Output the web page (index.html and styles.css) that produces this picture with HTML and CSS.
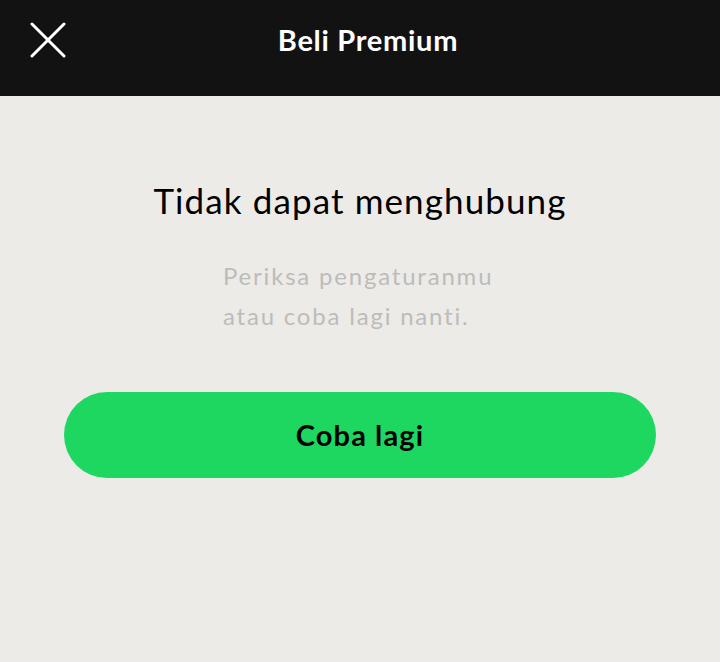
FILE: index.html
```html
<!DOCTYPE html>
<html>
<head>
<meta charset="utf-8">
<link rel="stylesheet" href="styles.css">
</head>
<body>
<div class="app">
  <header class="topbar">
    <button class="close" aria-label="Tutup">
      <svg width="36" height="36" viewBox="0 0 36 36"><path d="M2 2 L34 34 M34 2 L2 34" stroke="#fff" stroke-width="3" stroke-linecap="round" fill="none"/></svg>
    </button>
    <h1 class="title">Beli Premium</h1>
  </header>
  <main class="content">
    <h2 class="heading">Tidak dapat menghubung</h2>
    <p class="message">Periksa pengaturanmu<br>atau coba lagi nanti.</p>
    <button class="retry">Coba lagi</button>
  </main>
</div>
</body>
</html>
```
FILE: styles.css
```css
html, body {
  margin: 0;
  padding: 0;
}
body {
  width: 720px;
  height: 662px;
  background: #ecebe8;
  font-family: Lato, "Noto Sans", sans-serif;
  overflow: hidden;
}
.app {
  display: flex;
  flex-direction: column;
  height: 662px;
}
.topbar {
  height: 96px;
  background: #121212;
  display: flex;
  align-items: center;
  justify-content: center;
  position: relative;
  flex: none;
}
.close {
  position: absolute;
  left: 30px;
  top: 22px;
  width: 36px;
  height: 36px;
  padding: 0;
  border: 0;
  background: none;
  display: flex;
}
.title {
  margin: 0 0 16px 16px;
  color: #fff;
  font-size: 29px;
  font-weight: 700;
  letter-spacing: 0.7px;
  line-height: 34px;
}
.content {
  display: flex;
  flex-direction: column;
  align-items: center;
  padding-top: 82px;
}
.heading {
  margin: 0;
  font-size: 35px;
  font-weight: 400;
  color: #000;
  line-height: 44px;
  letter-spacing: 1.1px;
}
.message {
  margin: 34px 0 0 0;
  width: 280px;
  padding-left: 6px;
  text-align: left;
  color: #bdbcba;
  font-size: 24px;
  line-height: 40px;
  letter-spacing: 1.8px;
}
.retry {
  margin-top: 56px;
  width: 592px;
  height: 86px;
  border: 0;
  border-radius: 43px;
  background: #1ed760;
  color: #000;
  font-family: Lato, "Noto Sans", sans-serif;
  font-size: 29px;
  font-weight: 700;
  letter-spacing: 1.1px;
  padding: 0 0 2px 0;
}
```
